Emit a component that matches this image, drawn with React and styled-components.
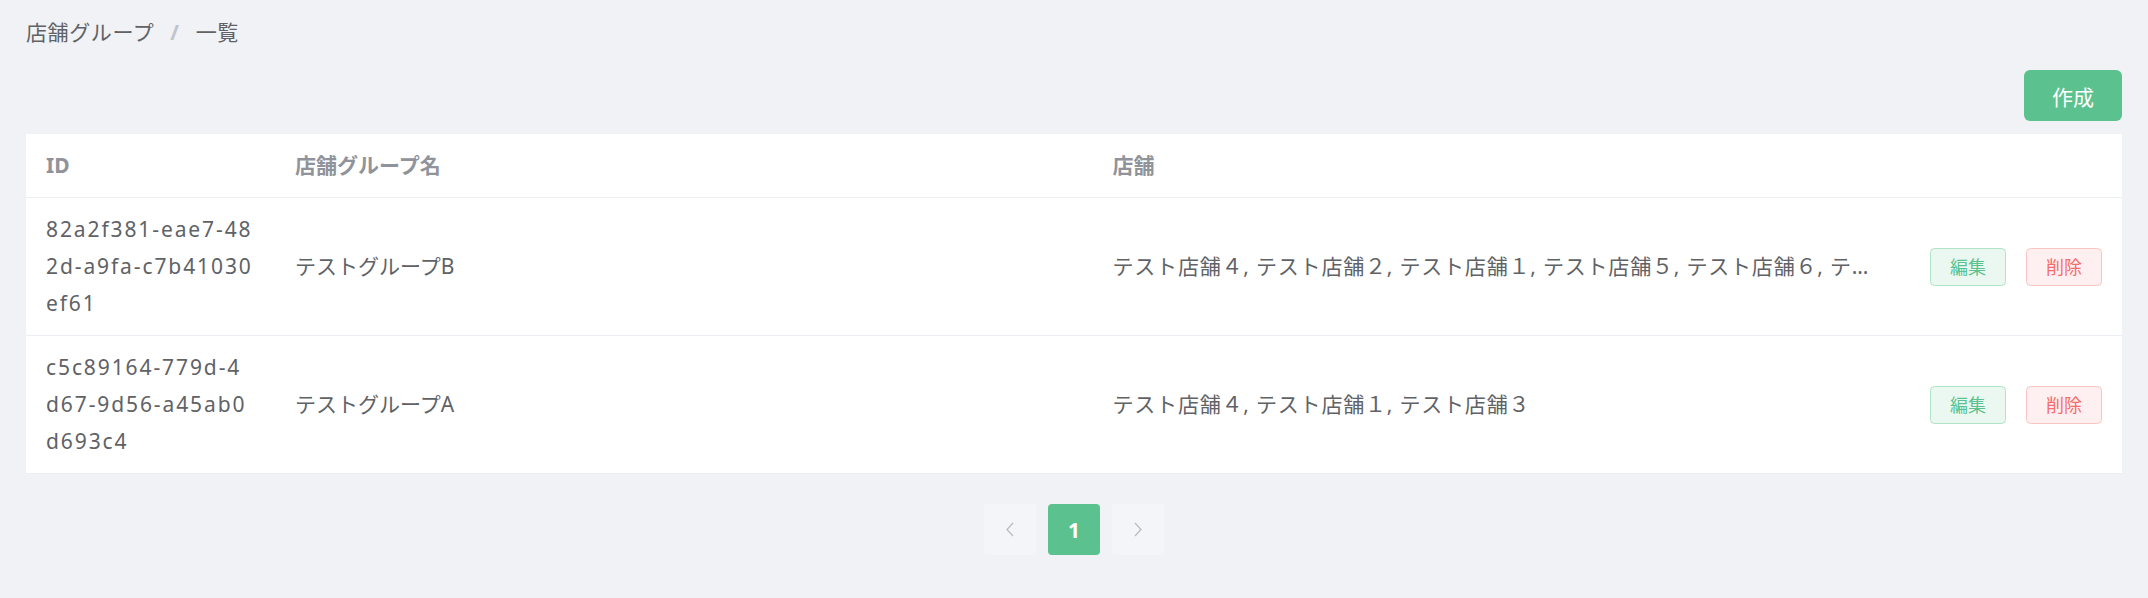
import styled, { createGlobalStyle } from "styled-components";

const GlobalStyle = createGlobalStyle`
  html, body {
    margin: 0;
    padding: 0;
    background: #f0f2f5;
  }
  body {
    font-family: "Noto Sans", "Noto Sans CJK JP", sans-serif;
    color: #606266;
  }
`;

const Page = styled.div`
  min-height: 598px;
  padding: 22px 26px 30px;
  box-sizing: border-box;
  display: flex;
  flex-direction: column;
`;

const Breadcrumb = styled.nav`
  display: flex;
  align-items: center;
  font-size: 21px;
  line-height: 21px;
  color: #606266;
  letter-spacing: 0.6px;
`;

const Separator = styled.span`
  margin: 0 16px;
  color: #c0c4cc;
  font-weight: 700;
`;

const Toolbar = styled.div`
  display: flex;
  justify-content: flex-end;
  margin-top: 27px;
  margin-bottom: 13px;
`;

const PrimaryButton = styled.button`
  height: 51px;
  padding: 0 28px;
  border: none;
  border-radius: 6px;
  background: #5bc28f;
  color: #fff;
  font-family: inherit;
  font-size: 21px;
  cursor: pointer;
`;

const Table = styled.table`
  width: 100%;
  table-layout: fixed;
  border-collapse: collapse;
  background: #fff;
  font-size: 21px;
  line-height: 37px;
`;

const Th = styled.th`
  text-align: left;
  font-weight: 700;
  color: #909399;
  padding: 13px 20px;
  border-bottom: 1px solid #ebeef5;
`;

const Td = styled.td`
  padding: 13px 20px;
  vertical-align: middle;
  border-bottom: 1px solid #ebeef5;
  color: #606266;
  ${(p) => p.$wrap && "word-break: break-all; letter-spacing: 1.9px;"}
  ${(p) =>
    p.$ellipsis &&
    "white-space: nowrap; overflow: hidden; text-overflow: ellipsis; letter-spacing: 0.8px;"}
`;

const Actions = styled.div`
  display: flex;
  gap: 20px;
`;

const PlainButton = styled.button`
  width: 76px;
  height: 38px;
  padding: 0;
  border-radius: 4.5px;
  font-family: inherit;
  font-size: 18px;
  line-height: 1;
  cursor: pointer;
  border: 1px solid ${(p) => (p.$danger ? "#fbc4c4" : "#ade3c7")};
  background: ${(p) => (p.$danger ? "#fef0f0" : "#eaf8f1")};
  color: ${(p) => (p.$danger ? "#f56c6c" : "#5bc28f")};
`;

const Pagination = styled.div`
  display: flex;
  justify-content: center;
  gap: 12px;
  margin-top: 30px;
`;

const PageButton = styled.button`
  width: 52px;
  height: 51px;
  border: none;
  border-radius: 4px;
  padding: 0;
  display: flex;
  align-items: center;
  justify-content: center;
  font-family: inherit;
  font-size: 21px;
  font-weight: 700;
  background: ${(p) => (p.$active ? "#5bc28f" : "#f4f5f8")};
  color: ${(p) => (p.$active ? "#fff" : "#b8bcc4")};
`;

const rows = [
  {
    id: "82a2f381-eae7-482d-a9fa-c7b41030ef61",
    name: "テストグループB",
    shops: "テスト店舗４, テスト店舗２, テスト店舗１, テスト店舗５, テスト店舗６, テスト店舗３",
  },
  {
    id: "c5c89164-779d-4d67-9d56-a45ab0d693c4",
    name: "テストグループA",
    shops: "テスト店舗４, テスト店舗１, テスト店舗３",
  },
];

function Chevron({ dir }) {
  return (
    <svg width="10" height="15" viewBox="0 0 10 15" fill="none">
      <polyline
        points={dir === "left" ? "8,1 2,7.5 8,14" : "2,1 8,7.5 2,14"}
        stroke="currentColor"
        strokeWidth="1.3"
      />
    </svg>
  );
}

export default function App() {
  return (
    <>
      <GlobalStyle />
      <Page>
        <Breadcrumb>
          <span>店舗グループ</span>
          <Separator>/</Separator>
          <span>一覧</span>
        </Breadcrumb>
        <Toolbar>
          <PrimaryButton>作成</PrimaryButton>
        </Toolbar>
        <Table>
          <colgroup>
            <col style={{ width: 249 }} />
            <col />
            <col />
            <col style={{ width: 212 }} />
          </colgroup>
          <thead>
            <tr>
              <Th>ID</Th>
              <Th>店舗グループ名</Th>
              <Th>店舗</Th>
              <Th />
            </tr>
          </thead>
          <tbody>
            {rows.map((r) => (
              <tr key={r.id}>
                <Td $wrap>{r.id}</Td>
                <Td>{r.name}</Td>
                <Td $ellipsis>{r.shops}</Td>
                <Td>
                  <Actions>
                    <PlainButton>編集</PlainButton>
                    <PlainButton $danger>削除</PlainButton>
                  </Actions>
                </Td>
              </tr>
            ))}
          </tbody>
        </Table>
        <Pagination>
          <PageButton>
            <Chevron dir="left" />
          </PageButton>
          <PageButton $active>1</PageButton>
          <PageButton>
            <Chevron dir="right" />
          </PageButton>
        </Pagination>
      </Page>
    </>
  );
}
